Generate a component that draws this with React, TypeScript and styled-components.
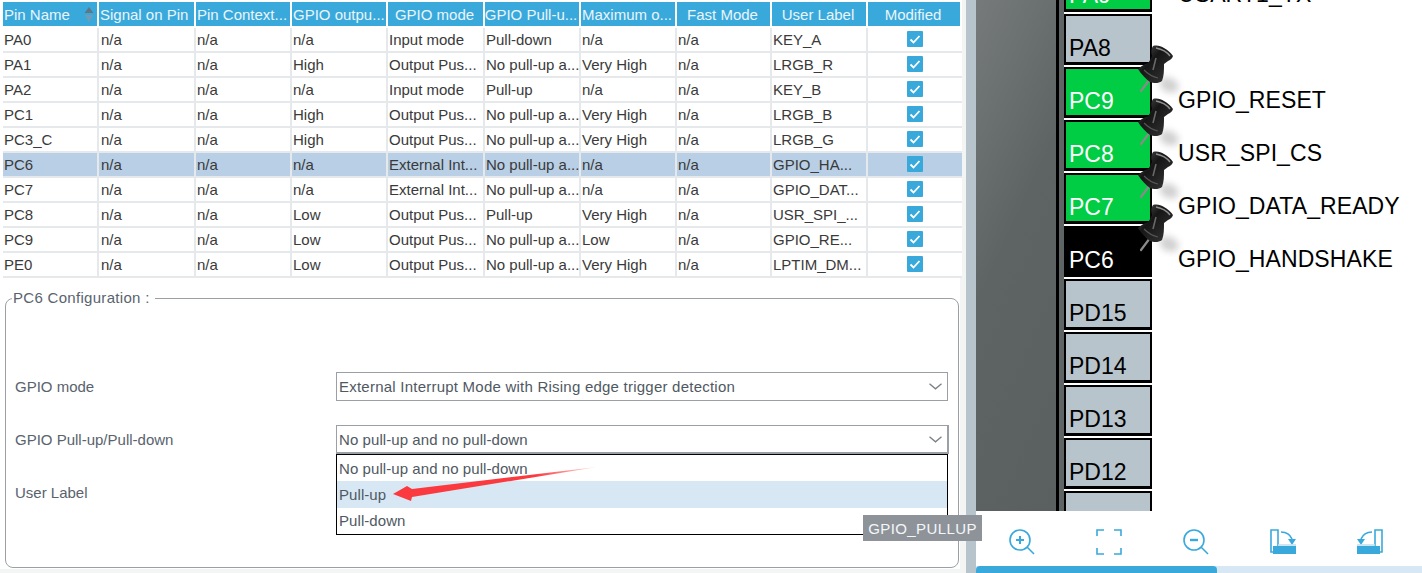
import React from 'react';
import styled, { createGlobalStyle } from 'styled-components';

const GlobalStyle = createGlobalStyle`
  html, body { margin: 0; padding: 0; background: #fff; }
  * { box-sizing: border-box; }
`;

const columns = '96px 97px 96px 96px 97px 96px 96px 95px 96px 94px';

const Page = styled.div`
  position: relative;
  display: flex;
  width: 1422px;
  height: 573px;
  overflow: hidden;
  font-family: 'Liberation Sans', Arial, sans-serif;
  font-size: 15px;
  color: #3a3a3a;
  background: #fff;
`;

const LeftPanel = styled.div`
  display: flex;
  flex-direction: column;
  width: 966px;
  background: #f3f4f4;
`;

const TableWrap = styled.div`
  width: 962px;
  padding: 2px 0 0 3px;
  background: #fff;
`;

const HeaderRow = styled.div`
  display: grid;
  grid-template-columns: ${columns};
  height: 24px;
  margin-bottom: 2px;
`;

const HeaderCell = styled.div<{ $left?: boolean }>`
  display: flex;
  align-items: center;
  justify-content: ${(p) => (p.$left ? 'flex-start' : 'center')};
  margin-right: 2px;
  padding: 0 ${(p) => (p.$left ? '0' : '3px')} 0 1px;
  background: #39a9dc;
  color: #e9f5fb;
  white-space: nowrap;
  overflow: hidden;
  line-height: 23px;
`;

const SortIcon = styled.svg`
  margin-left: auto;
  margin-right: 3px;
  flex: none;
`;

const Row = styled.div<{ $selected?: boolean }>`
  display: grid;
  grid-template-columns: ${columns};
  height: 25px;
  background: ${(p) => (p.$selected ? '#b8cfe5' : '#fff')};
`;

const Cell = styled.div<{ $center?: boolean }>`
  display: flex;
  align-items: center;
  justify-content: ${(p) => (p.$center ? 'center' : 'flex-start')};
  padding: 0 ${(p) => (p.$center ? '2px' : '0')} 1px 1px;
  border-right: 2px solid #e6e9ec;
  border-bottom: 2px solid #e6e9ec;
  white-space: nowrap;
  overflow: hidden;

  &:nth-child(2) {
    padding-left: 2px;
  }

  &:last-child {
    border-right: none;
  }
`;

const CheckBox = styled.svg`
  display: block;
`;

const ConfigWrap = styled.div`
  flex: 1;
  width: 960px;
  margin-bottom: 4px;
  padding: 11px 0 0 5px;
  background: #fff;
`;

const ConfigBox = styled.fieldset`
  width: 954px;
  height: 279px;
  margin: 0;
  padding: 65px 10px 0 9px;
  border: 1px solid #9aa0a6;
  border-radius: 8px;
`;

const Legend = styled.legend`
  margin-left: -3px;
  padding: 0 5px 0 1px;
  color: #59636d;
  letter-spacing: 0.3px;
  line-height: 18px;
`;

const FormGrid = styled.div`
  position: relative;
  display: grid;
  gap: 24px;
`;

const FormRow = styled.div`
  display: grid;
  grid-template-columns: 321px 1fr;
  align-items: center;
  height: 29px;
  color: #59636d;
`;

const SelectBox = styled.div<{ $open?: boolean; $spacing?: number }>`
  position: relative;
  display: flex;
  align-items: center;
  justify-content: space-between;
  height: 29px;
  margin-right: ${(p) => (p.$open ? '-1px' : '0')};
  padding: 0 5px 0 2px;
  border: 1px solid #9aa0a6;
  border-right-width: ${(p) => (p.$open ? '2px' : '1px')};
  border-bottom-width: ${(p) => (p.$open ? '2px' : '1px')};
  color: #4f5963;
  letter-spacing: ${(p) => p.$spacing ?? 0}px;
`;

const Chevron = styled.svg`
  flex: none;
`;

const Dropdown = styled.div`
  position: absolute;
  top: calc(100% + 2px);
  left: -1px;
  right: -1px;
  height: 81px;
  z-index: 2;
  border: 1px solid #000;
  background: #fff;
`;

const DropItem = styled.div<{ $active?: boolean }>`
  display: flex;
  align-items: center;
  height: 26.33px;
  padding-left: 2px;
  background: ${(p) => (p.$active ? '#d8e7f4' : 'transparent')};
  color: #4f5963;
  letter-spacing: 0.07px;
`;

const RedArrow = styled.svg`
  position: absolute;
  left: 380px;
  top: 460px;
  z-index: 3;
`;

const Tooltip = styled.div`
  position: absolute;
  left: 863px;
  top: 515px;
  z-index: 4;
  display: flex;
  align-items: center;
  justify-content: center;
  width: 119px;
  height: 26px;
  background: #8e9399;
  color: #f4f7fa;
  letter-spacing: 0.4px;
`;

const ScrollStrip = styled.div`
  flex: none;
  width: 10px;
  background: #b8c4cb;
`;

const RightPanel = styled.div`
  display: flex;
  flex: 1;
  flex-direction: column;
  min-width: 0;
  background: #fff;
`;

const ChipView = styled.div`
  display: flex;
  height: 511px;
  overflow: hidden;
`;

const ChipBody = styled.div`
  flex: none;
  width: 80px;
  background: linear-gradient(115deg, #767a7a 0%, #5e6464 45%, #5a5f5f 100%);
  border-right: 3px solid #000;
  box-sizing: content-box;
`;

const ChipRim = styled.div`
  flex: none;
  width: 5px;
  background: #5f6565;
`;

const PinColumn = styled.div`
  flex: 1;
  margin-top: -39px;
`;

const PinRow = styled.div`
  position: relative;
  display: flex;
  align-items: flex-end;
  height: 53px;
`;

const pinColors = {
  free: { bg: '#b8c4cb', fg: '#000' },
  used: { bg: '#00cc44', fg: '#fff' },
  selected: { bg: '#000', fg: '#fff' },
};

const Pin = styled.div<{ $kind: keyof typeof pinColors }>`
  display: flex;
  align-items: flex-end;
  flex: none;
  width: 88px;
  height: 51px;
  margin-bottom: 2px;
  padding-left: 3px;
  border: 2px solid #000;
  border-bottom-width: 3px;
  background: ${(p) => pinColors[p.$kind].bg};
  color: ${(p) => pinColors[p.$kind].fg};
  font-size: 23px;
  line-height: 28px;
`;

const PinLabel = styled.div`
  margin: 0 0 6px 26px;
  color: #000;
  font-size: 23px;
  line-height: 28px;
  letter-spacing: 0.1px;
  white-space: nowrap;
`;

const PushPinIcon = styled.svg`
  position: absolute;
  left: 72px;
  top: -23px;
  z-index: 1;
  pointer-events: none;
`;

const Toolbar = styled.div`
  display: flex;
  align-items: center;
  gap: 61px;
  height: 55px;
  padding: 7px 0 0 33px;
`;

const ToolIcon = styled.svg`
  display: block;
  flex: none;
  fill: none;
  stroke: #39a9dc;
  stroke-width: 1.6;
`;

const HScroll = styled.div`
  height: 7px;
  background: #d8e7f4;
`;

const HThumb = styled.div`
  width: 241px;
  height: 7px;
  border-radius: 4px 4px 0 0;
  background: #39a9dc;
`;

const headers = [
  'Pin Name',
  'Signal on Pin',
  'Pin Context...',
  'GPIO outpu...',
  'GPIO mode',
  'GPIO Pull-u...',
  'Maximum o...',
  'Fast Mode',
  'User Label',
  'Modified',
];

const IN = 'Input mode';
const OUT = 'Output Pus...';
const EXT = 'External Int...';
const NP = 'No pull-up a...';

const rows = [
  ['PA0', 'n/a', IN, 'Pull-down', 'n/a', 'KEY_A'],
  ['PA1', 'High', OUT, NP, 'Very High', 'LRGB_R'],
  ['PA2', 'n/a', IN, 'Pull-up', 'n/a', 'KEY_B'],
  ['PC1', 'High', OUT, NP, 'Very High', 'LRGB_B'],
  ['PC3_C', 'High', OUT, NP, 'Very High', 'LRGB_G'],
  ['PC6', 'n/a', EXT, NP, 'n/a', 'GPIO_HA...'],
  ['PC7', 'n/a', EXT, NP, 'n/a', 'GPIO_DAT...'],
  ['PC8', 'Low', OUT, 'Pull-up', 'Very High', 'USR_SPI_...'],
  ['PC9', 'Low', OUT, NP, 'Low', 'GPIO_RE...'],
  ['PE0', 'Low', OUT, NP, 'Very High', 'LPTIM_DM...'],
];

type PinInfo = {
  name: string;
  kind: keyof typeof pinColors;
  label?: string;
  pinned?: boolean;
};

const pins: PinInfo[] = [
  { name: 'PA9', kind: 'used', label: 'USART1_TX' },
  { name: 'PA8', kind: 'free' },
  { name: 'PC9', kind: 'used', label: 'GPIO_RESET', pinned: true },
  { name: 'PC8', kind: 'used', label: 'USR_SPI_CS', pinned: true },
  { name: 'PC7', kind: 'used', label: 'GPIO_DATA_READY', pinned: true },
  { name: 'PC6', kind: 'selected', label: 'GPIO_HANDSHAKE', pinned: true },
  { name: 'PD15', kind: 'free' },
  { name: 'PD14', kind: 'free' },
  { name: 'PD13', kind: 'free' },
  { name: 'PD12', kind: 'free' },
  { name: 'PD11', kind: 'free' },
];

const PushPin = () => (
  <PushPinIcon width="48" height="54" viewBox="0 0 48 54">
    <defs>
      <filter id="pinBlur" x="-60%" y="-60%" width="220%" height="220%">
        <feGaussianBlur stdDeviation="3.6" />
      </filter>
      <linearGradient id="pinMetal" x1="0" y1="0" x2="1" y2="1">
        <stop offset="0" stopColor="#5a5a5a" />
        <stop offset="0.4" stopColor="#161616" />
        <stop offset="0.75" stopColor="#2a2a2a" />
        <stop offset="1" stopColor="#4a4a4a" />
      </linearGradient>
    </defs>
    <ellipse cx="33" cy="41" rx="10" ry="7" fill="#a0a0a0" opacity="0.5" filter="url(#pinBlur)" transform="rotate(25 33 41)" />
    <path d="M5 47 L14 35" stroke="#8a8a8a" strokeWidth="2.2" strokeLinecap="round" />
    <path d="M17 2 C21 1 25 2 28 4 C32 6 35 9 37 12 C36 15 34 16 32 17 L28 20 C28 26 28 32 26 37 C22 40 17 39 14 38 C10 35 5 30 2 25 C5 22 9 20 12 19 C14 17 15 14 16 12 C15 8 15 5 17 2 Z" fill="url(#pinMetal)" />
    <path d="M20 4 C25 5 31 8 34 12" stroke="#8f8f8f" strokeWidth="1.4" fill="none" />
    <path d="M20 14 L17 26" stroke="#6a6a6a" strokeWidth="1.6" fill="none" />
    <path d="M8 26 C12 30 17 33 22 34" stroke="#555" strokeWidth="1.2" fill="none" />
  </PushPinIcon>
);

const Check = () => (
  <CheckBox width="16" height="16" viewBox="0 0 16 16">
    <rect width="16" height="16" rx="1" fill="#39a9dc" />
    <path d="M3.5 8.5 L6.5 11.5 L12.5 5" fill="none" stroke="#fff" strokeWidth="1.8" />
  </CheckBox>
);

const Caret = () => (
  <Chevron width="13" height="7" viewBox="0 0 13 7">
    <path d="M0.5 0.8 L6.5 5.8 L12.5 0.8" fill="none" stroke="#7b8084" strokeWidth="1.3" />
  </Chevron>
);

const App = () => (
  <Page>
    <GlobalStyle />
    <LeftPanel>
      <TableWrap>
        <HeaderRow>
          {headers.map((h, i) => (
            <HeaderCell key={h} $left={i < 4}>
              {h}
              {i === 0 && (
                <SortIcon width="10" height="18" viewBox="0 0 10 18">
                  <path d="M5 2 L9.5 8 H0.5 Z" fill="#5f7684" />
                  <path d="M5 17 L9.5 10 H0.5 Z" fill="#6f9cb8" />
                </SortIcon>
              )}
            </HeaderCell>
          ))}
        </HeaderRow>
        {rows.map((r) => (
          <Row key={r[0]} $selected={r[0] === 'PC6'}>
            <Cell>{r[0]}</Cell>
            <Cell>n/a</Cell>
            <Cell>n/a</Cell>
            <Cell>{r[1]}</Cell>
            <Cell>{r[2]}</Cell>
            <Cell>{r[3]}</Cell>
            <Cell>{r[4]}</Cell>
            <Cell>n/a</Cell>
            <Cell>{r[5]}</Cell>
            <Cell $center>
              <Check />
            </Cell>
          </Row>
        ))}
      </TableWrap>
      <ConfigWrap>
        <ConfigBox>
          <Legend>PC6 Configuration :</Legend>
          <FormGrid>
            <FormRow>
              <span>GPIO mode</span>
              <SelectBox $spacing={0.23}>
                External Interrupt Mode with Rising edge trigger detection
                <Caret />
              </SelectBox>
            </FormRow>
            <FormRow>
              <span>GPIO Pull-up/Pull-down</span>
              <SelectBox $open $spacing={0.07}>
                No pull-up and no pull-down
                <Caret />
                <Dropdown>
                  <DropItem>No pull-up and no pull-down</DropItem>
                  <DropItem $active>Pull-up</DropItem>
                  <DropItem>Pull-down</DropItem>
                </Dropdown>
              </SelectBox>
            </FormRow>
            <FormRow>
              <span>User Label</span>
            </FormRow>
          </FormGrid>
        </ConfigBox>
      </ConfigWrap>
    </LeftPanel>
    <ScrollStrip />
    <RightPanel>
      <ChipView>
        <ChipBody />
        <ChipRim />
        <PinColumn>
          {pins.map((p) => (
            <PinRow key={p.name}>
              <Pin $kind={p.kind}>{p.name}</Pin>
              {p.label && <PinLabel>{p.label}</PinLabel>}
              {p.pinned && <PushPin />}
            </PinRow>
          ))}
        </PinColumn>
      </ChipView>
      <Toolbar>
        <ToolIcon width="26" height="26" viewBox="0 0 26 26">
          <circle cx="11" cy="11" r="10" />
          <path d="M18 18 L25 25" />
          <path d="M7 11 H15 M11 7 V15" strokeWidth="2" />
        </ToolIcon>
        <ToolIcon width="26" height="26" viewBox="0 0 26 26">
          <path d="M1 7 V1 H8 M18 1 H25 V7 M25 19 V25 H18 M8 25 H1 V19" />
        </ToolIcon>
        <ToolIcon width="26" height="26" viewBox="0 0 26 26">
          <circle cx="11" cy="11" r="10" />
          <path d="M18 18 L25 25" />
          <path d="M7 11 H15" strokeWidth="2.4" />
        </ToolIcon>
        <ToolIcon width="26" height="26" viewBox="0 0 26 26">
          <path d="M8 23 H1 V1 H8 V17" />
          <path d="M11 3 C16 3 20 5 22 10" />
          <path d="M18 10 H26 L22 16 Z" fill="#39a9dc" stroke="none" />
          <path d="M8 16 H26" stroke="#bfe0f1" />
          <rect x="3" y="17" width="23" height="8" fill="#39a9dc" stroke="none" />
        </ToolIcon>
        <ToolIcon width="26" height="26" viewBox="0 0 26 26">
          <path d="M18 23 H25 V1 H18 V17" />
          <path d="M15 3 C10 3 6 5 4 10" />
          <path d="M0 10 H8 L4 16 Z" fill="#39a9dc" stroke="none" />
          <path d="M0 16 H18" stroke="#bfe0f1" />
          <rect x="0" y="17" width="23" height="8" fill="#39a9dc" stroke="none" />
        </ToolIcon>
      </Toolbar>
      <HScroll>
        <HThumb />
      </HScroll>
    </RightPanel>
    <RedArrow width="230" height="50" viewBox="0 0 230 50">
      <defs>
        <linearGradient id="arrowFade" x1="0" y1="0" x2="1" y2="0">
          <stop offset="0" stopColor="#fb3a3f" />
          <stop offset="0.7" stopColor="#fb3a3f" />
          <stop offset="1" stopColor="#fb3a3f" stopOpacity="0.15" />
        </linearGradient>
      </defs>
      <path d="M13 34 L27 26 L32 29 L217 7 L32 37 L31 41 Z" fill="url(#arrowFade)" />
    </RedArrow>
    <Tooltip>GPIO_PULLUP</Tooltip>
  </Page>
);

export default App;
